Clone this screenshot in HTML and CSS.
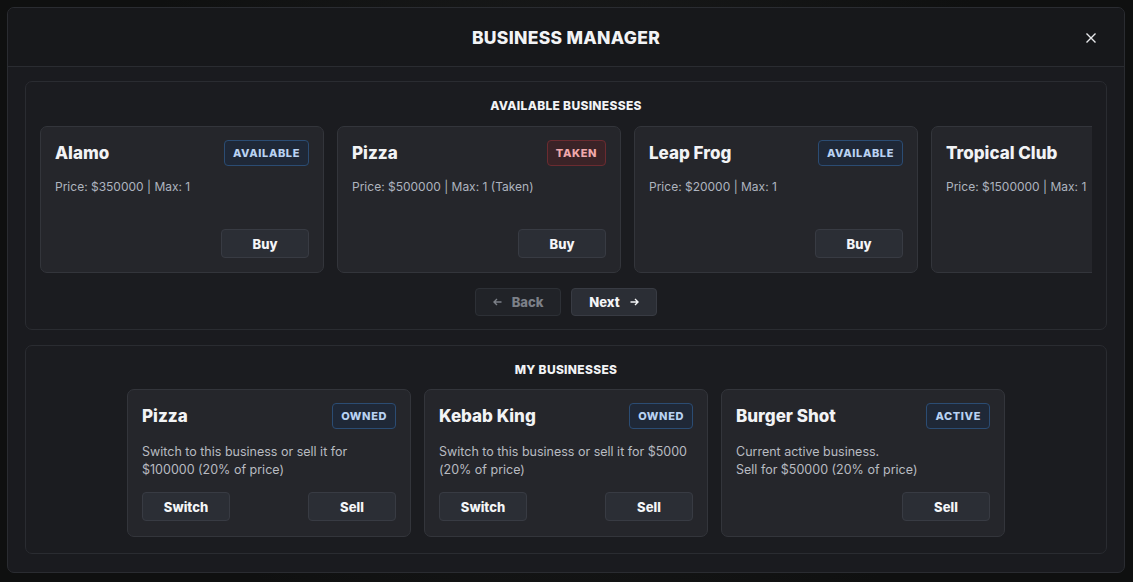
FILE: index.html
```html
<html>
<head>
<link rel="stylesheet" href="styles.css">
</head>
<body>
<div class="modal">
  <div class="modal-header">
    <div class="modal-title">BUSINESS MANAGER</div>
    <button class="close-btn">
      <svg width="12" height="12" viewBox="0 0 12 12"><path d="M1.5 1.5 L10.5 10.5 M10.5 1.5 L1.5 10.5" stroke="#e8e9ec" stroke-width="1.4" fill="none"/></svg>
    </button>
  </div>
  <div class="modal-body">
    <div class="section">
      <div class="section-title">AVAILABLE BUSINESSES</div>
      <div class="track">
        <div class="card">
          <div class="card-head">
            <div class="card-name">Alamo</div>
            <span class="badge">AVAILABLE</span>
          </div>
          <div class="card-text">Price: $350000 | Max: 1</div>
          <div class="card-actions"><button class="btn">Buy</button></div>
        </div>
        <div class="card">
          <div class="card-head">
            <div class="card-name">Pizza</div>
            <span class="badge taken">TAKEN</span>
          </div>
          <div class="card-text">Price: $500000 | Max: 1 (Taken)</div>
          <div class="card-actions"><button class="btn">Buy</button></div>
        </div>
        <div class="card">
          <div class="card-head">
            <div class="card-name">Leap Frog</div>
            <span class="badge">AVAILABLE</span>
          </div>
          <div class="card-text">Price: $20000 | Max: 1</div>
          <div class="card-actions"><button class="btn">Buy</button></div>
        </div>
        <!-- last card is cut by the track, only name and price show -->
        <div class="card">
          <div class="card-head">
            <div class="card-name">Tropical Club</div>
          </div>
          <div class="card-text">Price: $1500000 | Max: 1</div>
        </div>
      </div>
      <div class="pager">
        <button class="btn nav-btn disabled">
          <svg width="9" height="8" viewBox="0 0 9 8"><path d="M8.5 4 H1 M4 1 L1 4 L4 7" stroke="currentColor" stroke-width="1.4" fill="none"/></svg>
          Back
        </button>
        <button class="btn nav-btn">
          Next
          <svg width="9" height="8" viewBox="0 0 9 8"><path d="M0.5 4 H8 M5 1 L8 4 L5 7" stroke="currentColor" stroke-width="1.4" fill="none"/></svg>
        </button>
      </div>
    </div>

    <div class="section">
      <div class="section-title">MY BUSINESSES</div>
      <div class="owned">
        <div class="card">
          <div class="card-head">
            <div class="card-name">Pizza</div>
            <span class="badge">OWNED</span>
          </div>
          <div class="card-text desc">Switch to this business or sell it for $100000 (20% of price)</div>
          <div class="card-actions split"><button class="btn">Switch</button><button class="btn">Sell</button></div>
        </div>
        <div class="card">
          <div class="card-head">
            <div class="card-name">Kebab King</div>
            <span class="badge">OWNED</span>
          </div>
          <div class="card-text desc">Switch to this business or sell it for $5000 (20% of price)</div>
          <div class="card-actions split"><button class="btn">Switch</button><button class="btn">Sell</button></div>
        </div>
        <div class="card">
          <div class="card-head">
            <div class="card-name">Burger Shot</div>
            <span class="badge">ACTIVE</span>
          </div>
          <div class="card-text desc">Current active business.<br>Sell for $50000 (20% of price)</div>
          <div class="card-actions"><button class="btn">Sell</button></div>
        </div>
      </div>
    </div>
  </div>
</div>
</body>
</html>
```

FILE: styles.css
```css
* {
box-sizing: border-box;
}

body {
margin: 0;
padding: 7px;
height: 582px;
overflow: hidden;
background: radial-gradient(circle at 50% 40%, #1c1d1e 0%, #0f1010 70%);
font-family: Inter, "Noto Sans", sans-serif;
color: #f2f3f5;
}

.modal {
width: 1118px;
height: 566px;
background: #1a1b1f;
border: 1px solid #2a2c31;
border-radius: 7px;
overflow: hidden;
display: flex;
flex-direction: column;
}

.modal-header {
height: 59px;
flex-shrink: 0;
background: #17181b;
border-bottom: 1px solid #2a2c31;
display: flex;
align-items: center;
justify-content: center;
position: relative;
}

.modal-title {
font-size: 17.5px;
font-weight: 800;
letter-spacing: 0.3px;
}

.close-btn {
position: absolute;
right: 26px;
top: 23px;
width: 14px;
height: 14px;
padding: 0;
border: none;
background: none;
display: flex;
align-items: center;
justify-content: center;
}

.modal-body {
padding: 14px 17px 0;
display: flex;
flex-direction: column;
gap: 15px;
}

.section {
background: #1b1c20;
border: 1px solid #2a2c31;
border-radius: 7px;
padding: 16px 14px 13px;
}

.section-title {
text-align: center;
font-size: 12px;
font-weight: 800;
line-height: 16px;
letter-spacing: 0.3px;
margin-bottom: 12px;
}

.track {
display: flex;
gap: 13px;
overflow: hidden;
}

.owned {
display: flex;
gap: 13px;
justify-content: center;
margin-top: -1px;
padding-bottom: 3px;
}

.card {
width: 284px;
height: 147px;
flex-shrink: 0;
background: #25262b;
border: 1px solid #33353b;
border-radius: 7px;
padding: 14px;
display: flex;
flex-direction: column;
}

.owned .card {
height: 148px;
padding-bottom: 15px;
}

.card-head {
display: flex;
align-items: center;
justify-content: space-between;
height: 24px;
}

.card-name {
font-size: 17px;
font-weight: 800;
}

.badge {
height: 26px;
padding: 0 8px;
display: flex;
align-items: center;
font-size: 11px;
font-weight: 800;
letter-spacing: 0.6px;
color: #b9d2f2;
background: #1f2837;
border: 1px solid #2b4c73;
border-radius: 4px;
}

.badge.taken {
color: #f0a9ac;
background: #3a2327;
border-color: #6b2b30;
}

.card-text {
margin-top: 13px;
font-size: 12px;
line-height: 18px;
color: #aeb4bf;
}

.card-text.desc {
margin-top: 15px;
font-size: 12.5px;
color: #b8bbc1;
}

.card-actions {
margin-top: auto;
display: flex;
justify-content: flex-end;
}

.card-actions.split {
justify-content: space-between;
}

.btn {
width: 88px;
height: 29px;
background: #2b2e35;
border: 1px solid #383b43;
border-radius: 4px;
color: #f4f5f7;
font-family: inherit;
font-size: 13px;
font-weight: 800;
display: flex;
align-items: center;
justify-content: center;
gap: 10px;
padding: 0;
}

.pager {
margin-top: 15px;
display: flex;
justify-content: center;
gap: 10px;
}

.nav-btn {
width: 86px;
height: 28px;
}

.nav-btn.disabled {
background: #212328;
border-color: #2d3036;
color: #7c8088;
}
```
